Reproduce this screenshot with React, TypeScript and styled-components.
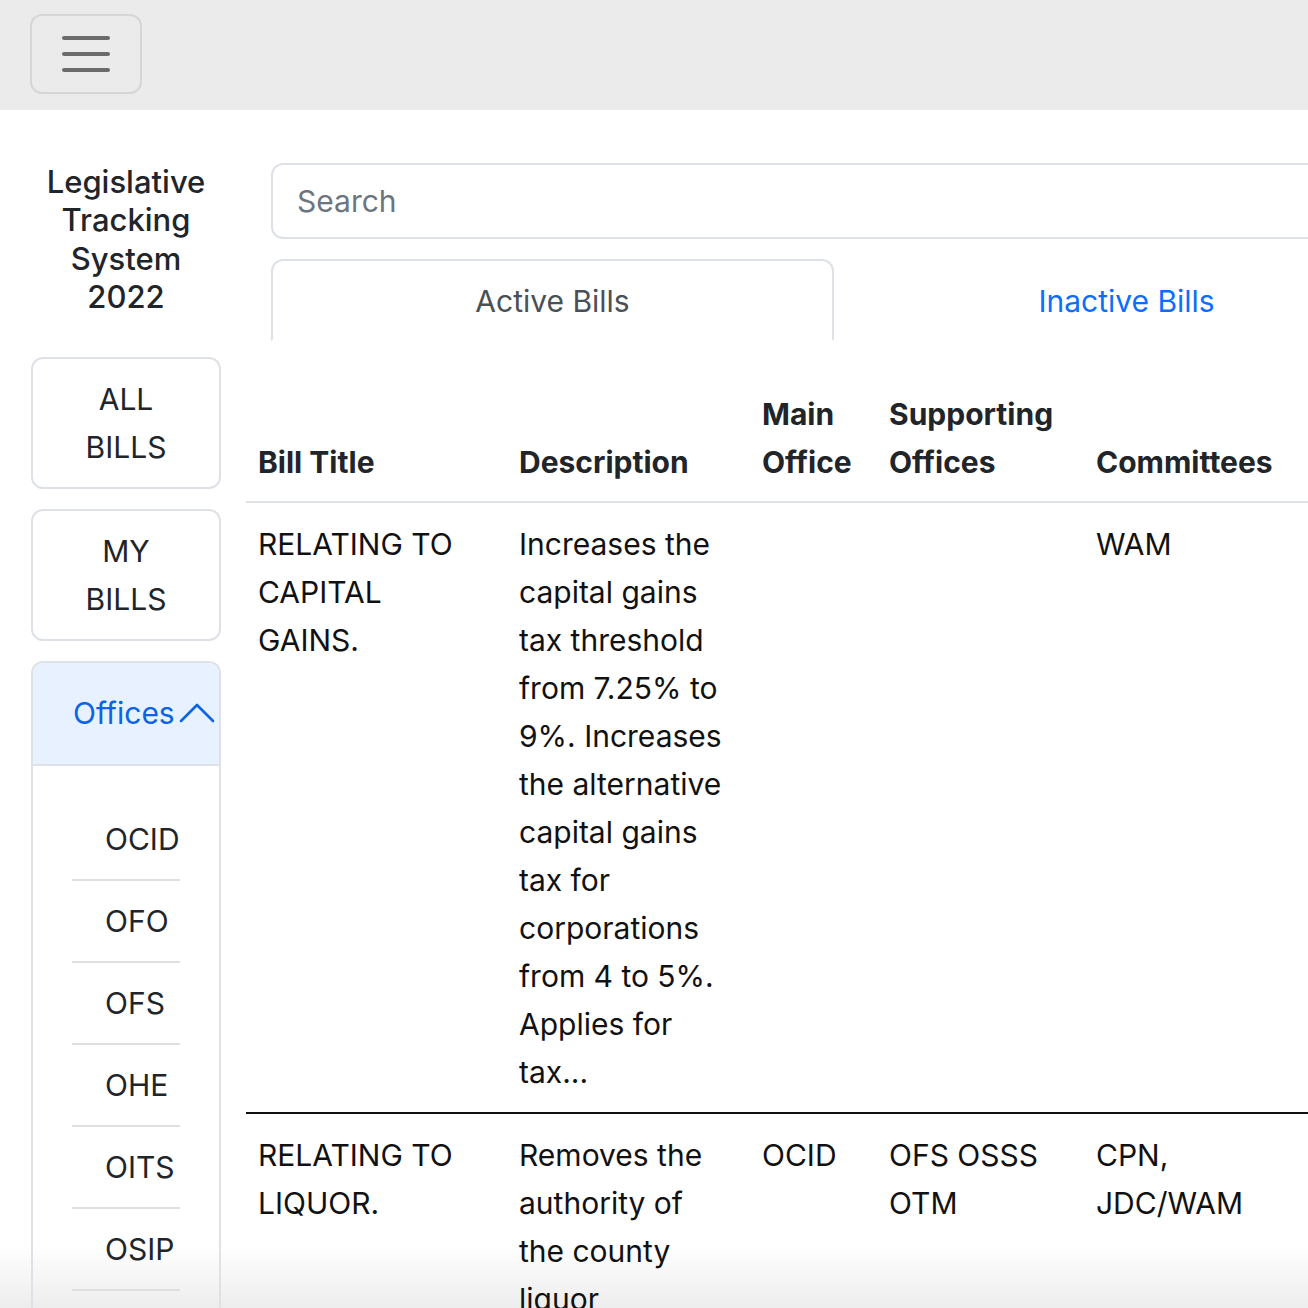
import React from "react";
import styled, { createGlobalStyle } from "styled-components";

const Global = createGlobalStyle`
  html, body { margin: 0; padding: 0; background: #fff; overflow: hidden; }
  body {
    font-family: Inter, "Liberation Sans", sans-serif;
    color: #212529;
    font-size: 30px;
    line-height: 48px;
  }
  * { box-sizing: border-box; }
`;

const Page = styled.div`
  width: 1308px;
  height: 1308px;
  overflow: hidden;
  background: linear-gradient(to bottom, #fff 0, #fff 1244px, #ededed 1308px);
`;

const Navbar = styled.nav`
  height: 110px;
  background: #ebebeb;
  display: flex;
  align-items: center;
  padding-left: 30px;
`;

const Toggler = styled.button`
  width: 112px;
  height: 80px;
  border: 2px solid #d6d6d6;
  border-radius: 12px;
  background: transparent;
  display: flex;
  flex-direction: column;
  align-items: center;
  justify-content: center;
  gap: 12px;
  padding: 0;
  margin-top: -2px;
`;

const Bar = styled.span`
  display: block;
  width: 48px;
  height: 4px;
  border-radius: 2px;
  background: #6b6b6b;
`;

const Layout = styled.div`
  display: flex;
  align-items: flex-start;
  padding-top: 53px;
`;

const Sidebar = styled.aside`
  width: 190px;
  margin-left: 31px;
  margin-right: 25px;
  flex: none;
  display: flex;
  flex-direction: column;
`;

const Title = styled.h1`
  margin: 0 0 40px;
  font-size: 31px;
  font-weight: 500;
  line-height: 38.4px;
  text-align: center;
  color: #212529;
`;

const NavButton = styled.div`
  border: 2px solid #dee2e6;
  border-radius: 12px;
  padding: 16px 30px;
  text-align: center;
  font-size: 30px;
  line-height: 48px;
  margin-bottom: 20px;
  color: #212529;
`;

const Accordion = styled.div`
  border: 2px solid #dee2e6;
  border-bottom: none;
  border-radius: 12px 12px 0 0;
  overflow: hidden;
`;

const AccordionHeader = styled.div`
  height: 103px;
  background: #e7f1ff;
  border-bottom: 2px solid #dee2e6;
  display: flex;
  align-items: center;
  padding-left: 40px;
  color: #0c63e4;
  font-size: 30px;
  gap: 4px;
`;

const AccordionBody = styled.ul`
  list-style: none;
  margin: 0;
  padding: 33px 39px 40px 39px;
`;

const OfficeItem = styled.li`
  padding: 16px 0 16px 33px;
  border-bottom: 2px solid #dfdfdf;
  color: #212529;
  font-size: 30px;
  line-height: 48px;
`;

const Main = styled.main`
  width: 1198px;
  flex: none;
`;

const Inner = styled.div`
  padding: 0 25px;
`;

const Search = styled.input`
  width: 100%;
  height: 76px;
  border: 2px solid #dee2e6;
  border-radius: 12px;
  padding: 0 24px;
  font-family: inherit;
  font-size: 30px;
  color: #212529;
  outline: none;
  display: block;
  &::placeholder { color: #6c757d; }
`;

const Tabs = styled.div`
  display: flex;
  margin-top: 20px;
  border-bottom: 2px solid #dee2e6;
`;

const Tab = styled.div<{ $active?: boolean }>`
  flex: 1 1 auto;
  text-align: center;
  height: 82px;
  display: flex;
  align-items: center;
  justify-content: center;
  font-size: 30px;
  margin-bottom: -2px;
  border: 2px solid ${(p) => (p.$active ? "#dee2e6" : "transparent")};
  border-bottom-color: ${(p) => (p.$active ? "#fff" : "transparent")};
  border-radius: 12px 12px 0 0;
  background: #fff;
  color: ${(p) => (p.$active ? "#495057" : "#0d6efd")};
  padding: 2px 0 0;
`;

const Table = styled.table`
  width: 100%;
  margin-top: 33px;
  border-collapse: collapse;
  table-layout: fixed;
`;

const Th = styled.th`
  text-align: left;
  vertical-align: bottom;
  font-weight: 700;
  font-size: 30px;
  line-height: 48px;
  padding: 16px 12px 15px;
  color: #212529;
  border-bottom: 2px solid #dee2e6;
`;

const Row = styled.tr<{ $divider?: boolean }>`
  border-bottom: ${(p) => (p.$divider ? "2px solid #111" : "none")};
`;

const Td = styled.td`
  vertical-align: top;
  font-size: 30px;
  line-height: 48px;
  padding: 17px 12px 16px;
  color: #111;
`;

const Line = styled.span`
  display: block;
  white-space: nowrap;
`;

const Chevron = () => (
  <svg width="36" height="22" viewBox="0 0 36 22" fill="none">
    <polyline points="2,19 18,3 34,19" stroke="#0c63e4" strokeWidth="2.6" strokeLinecap="round" strokeLinejoin="round" />
  </svg>
);

const Lines = ({ items }: { items: string[] }) => (
  <>
    {items.map((t, i) => (
      <Line key={i}>{t}</Line>
    ))}
  </>
);

const offices = ["OCID", "OFO", "OFS", "OHE", "OITS", "OSIP", "OSSS"];

const bills = [
  {
    title: ["RELATING TO", "CAPITAL", "GAINS."],
    desc: [
      "Increases the",
      "capital gains",
      "tax threshold",
      "from 7.25% to",
      "9%. Increases",
      "the alternative",
      "capital gains",
      "tax for",
      "corporations",
      "from 4 to 5%.",
      "Applies for",
      "tax...",
    ],
    main: [] as string[],
    support: [] as string[],
    committees: ["WAM"],
  },
  {
    title: ["RELATING TO", "LIQUOR."],
    desc: ["Removes the", "authority of", "the county", "liquor", "commission..."],
    main: ["OCID"],
    support: ["OFS OSSS", "OTM"],
    committees: ["CPN,", "JDC/WAM"],
  },
];

export default function App() {
  return (
    <Page>
      <Global />
      <Navbar>
        <Toggler aria-label="Toggle navigation">
          <Bar />
          <Bar />
          <Bar />
        </Toggler>
      </Navbar>
      <Layout>
        <Sidebar>
          <Title>
            Legislative Tracking System 2022
          </Title>
          <NavButton>ALL BILLS</NavButton>
          <NavButton>MY BILLS</NavButton>
          <Accordion>
            <AccordionHeader>
              Offices
              <Chevron />
            </AccordionHeader>
            <AccordionBody>
              {offices.map((o) => (
                <OfficeItem key={o}>{o}</OfficeItem>
              ))}
            </AccordionBody>
          </Accordion>
        </Sidebar>
        <Main>
          <Inner>
            <Search placeholder="Search" />
            <Tabs>
              <Tab $active>Active Bills</Tab>
              <Tab>Inactive Bills</Tab>
            </Tabs>
          </Inner>
          <Table>
            <colgroup>
              <col style={{ width: 261 }} />
              <col style={{ width: 243 }} />
              <col style={{ width: 127 }} />
              <col style={{ width: 207 }} />
              <col />
            </colgroup>
            <thead>
              <tr>
                <Th>Bill Title</Th>
                <Th>Description</Th>
                <Th>
                  <Lines items={["Main", "Office"]} />
                </Th>
                <Th>
                  <Lines items={["Supporting", "Offices"]} />
                </Th>
                <Th>Committees</Th>
              </tr>
            </thead>
            <tbody>
              {bills.map((b, i) => (
                <Row key={i} $divider={i === 0}>
                  <Td><Lines items={b.title} /></Td>
                  <Td><Lines items={b.desc} /></Td>
                  <Td><Lines items={b.main} /></Td>
                  <Td><Lines items={b.support} /></Td>
                  <Td><Lines items={b.committees} /></Td>
                </Row>
              ))}
            </tbody>
          </Table>
        </Main>
      </Layout>
    </Page>
  );
}
